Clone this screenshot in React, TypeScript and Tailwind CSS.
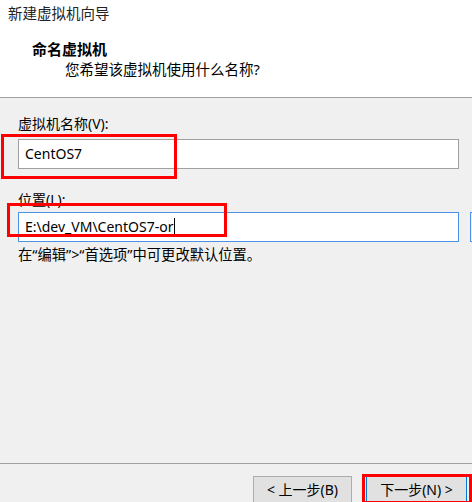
export default function App() {
  return (
    <div
      className="relative w-[472px] h-[502px] overflow-hidden bg-[#f0f0f0] text-[14px] text-black"
      style={{ fontFamily: '"Noto Sans", "Noto Sans CJK SC", sans-serif' }}
    >
      {/* header */}
      <div className="h-[98px] bg-white border-b border-[#a0a0a0]">
        <div className="pt-[3px] pl-[8px] leading-[20px] text-[14.5px] text-[#222]">新建虚拟机向导</div>
        <div className="pt-[16px] pl-[32px] leading-[20px] text-[15px] font-bold">命名虚拟机</div>
        <div className="pl-[65px] leading-[20px] text-[14.5px]">您希望该虚拟机使用什么名称?</div>
      </div>

      {/* form */}
      <div className="pl-[18px] pt-[16px]">
        <div className="leading-[20px]">虚拟机名称(V):</div>
        <div className="mt-[5px] w-[441px] h-[30px] bg-white border border-[#a0a0a0] flex items-center pl-[6px] leading-none">
          CentOS7
        </div>

        <div className="mt-[21px] leading-[20px]">位置(L):</div>
        <div className="mt-[2px] flex gap-[11px] w-[600px]">
          <div className="w-[441px] h-[30px] shrink-0 bg-white border border-[#4a92e4] flex items-center pl-[6px] leading-none">
            <span>E:\dev_VM\CentOS7-or</span>
            <span className="ml-[1px] w-[1px] h-[18px] bg-black" />
          </div>
          <div className="w-[80px] h-[30px] shrink-0 bg-[#e5f1fb] border border-[#4a92e4]" />
        </div>
        <div className="mt-[3px] leading-[20px] text-[14.3px]">在“编辑”&gt;“首选项”中可更改默认位置。</div>
      </div>

      {/* footer */}
      <div className="absolute left-0 right-0 top-[463px] border-t border-[#a0a0a0]">
        <div className="flex justify-end gap-[14px] pt-[12px] pr-[5px]">
          <div className="w-[99px] h-[28px] bg-[#e1e1e1] border border-[#adadad] flex items-center justify-center leading-none">
            &lt; 上一步(B)
          </div>
          <div className="w-[101px] h-[28px] bg-[#e1e1e1] border border-[#0078d7] flex items-center justify-center leading-none">
            下一步(N) &gt;
          </div>
        </div>
      </div>

      {/* red annotation boxes */}
      <div className="absolute left-[1px] top-[134px] w-[176px] h-[45px] border-[3px] border-[#f00]" />
      <div className="absolute left-[7px] top-[203px] w-[220px] h-[34px] border-[3px] border-[#f00]" />
      <div className="absolute left-[362px] top-[474px] w-[110px] h-[30px] border-[3px] border-[#f00]" />
    </div>
  );
}
